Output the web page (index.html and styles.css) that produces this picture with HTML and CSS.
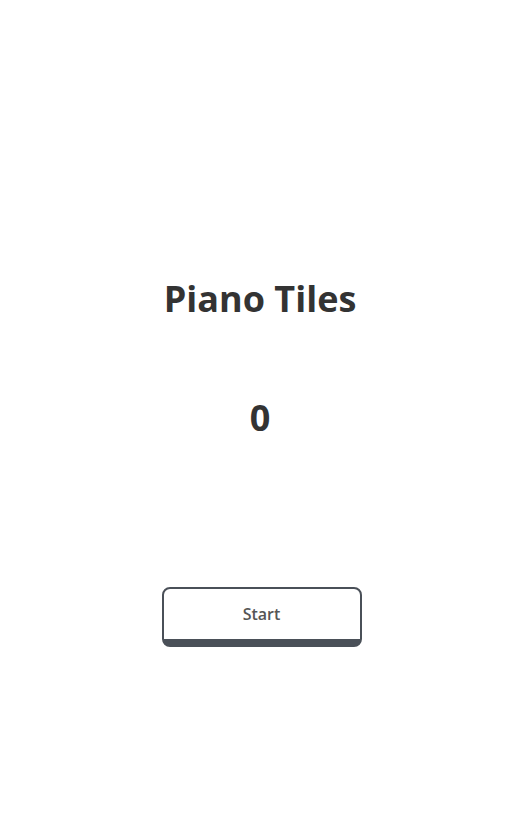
FILE: index.html
```html
<!DOCTYPE html>
<html>
<head>
<meta charset="utf-8">
<link rel="stylesheet" href="styles.css">
</head>
<body>
<main class="screen">
  <h1 class="title">Piano Tiles</h1>
  <div class="score">0</div>
  <button class="start">Start</button>
</main>
</body>
</html>
```
FILE: styles.css
```css
html, body {
  margin: 0;
  padding: 0;
  background: #fff;
}
.screen {
  height: 835px;
  display: flex;
  flex-direction: column;
  align-items: center;
  font-family: "Open Sans", sans-serif;
  color: #333;
  padding-top: 274px;
  padding-right: 1px;
  box-sizing: border-box;
}
.title {
  margin: 0;
  font-size: 36px;
  font-weight: 700;
  line-height: 50px;
  color: #333;
}
.score {
  margin-top: 69px;
  font-size: 36px;
  font-weight: 700;
  line-height: 50px;
}
.start {
  margin-top: 144px;
  margin-left: 3px;
  width: 200px;
  height: 60px;
  background: #fff;
  border: 2px solid #4a5058;
  border-bottom-width: 8px;
  border-radius: 8px;
  font-family: "Open Sans", sans-serif;
  font-size: 16px;
  font-weight: 600;
  color: #555;
  padding: 0;
  box-sizing: border-box;
}
```
